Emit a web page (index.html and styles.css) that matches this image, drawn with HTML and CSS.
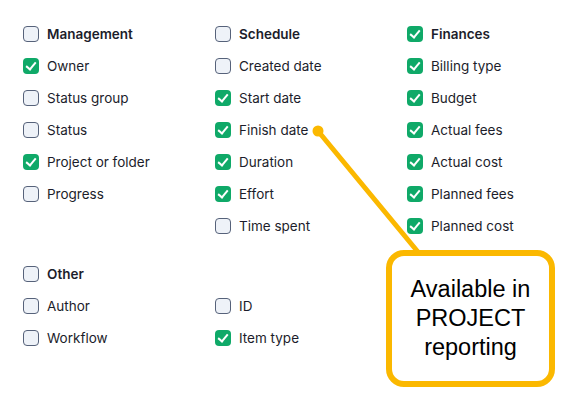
FILE: index.html
```html
<!DOCTYPE html>
<html lang="en">
<head>
    <meta charset="UTF-8">
    <title>Report fields</title>
    <link rel="stylesheet" href="styles.css">
</head>
<body>
    <div class="fields">
        <div class="group">
            <div class="column">
                <label class="field title"><span class="box"></span>Management</label>
                <label class="field"><span class="box checked"></span>Owner</label>
                <label class="field"><span class="box"></span>Status group</label>
                <label class="field"><span class="box"></span>Status</label>
                <label class="field"><span class="box checked"></span>Project or folder</label>
                <label class="field"><span class="box"></span>Progress</label>
            </div>
            <div class="column">
                <label class="field title"><span class="box"></span>Schedule</label>
                <label class="field"><span class="box"></span>Created date</label>
                <label class="field"><span class="box checked"></span>Start date</label>
                <label class="field"><span class="box checked"></span>Finish date</label>
                <label class="field"><span class="box checked"></span>Duration</label>
                <label class="field"><span class="box checked"></span>Effort</label>
                <label class="field"><span class="box"></span>Time spent</label>
            </div>
            <div class="column">
                <label class="field title"><span class="box checked"></span>Finances</label>
                <label class="field"><span class="box checked"></span>Billing type</label>
                <label class="field"><span class="box checked"></span>Budget</label>
                <label class="field"><span class="box checked"></span>Actual fees</label>
                <label class="field"><span class="box checked"></span>Actual cost</label>
                <label class="field"><span class="box checked"></span>Planned fees</label>
                <label class="field"><span class="box checked"></span>Planned cost</label>
            </div>
        </div>

        <div class="group other">
            <div class="column">
                <label class="field title"><span class="box"></span>Other</label>
                <label class="field"><span class="box"></span>Author</label>
                <label class="field"><span class="box"></span>Workflow</label>
            </div>
            <div class="column">
                <div class="field"></div>
                <label class="field"><span class="box"></span>ID</label>
                <label class="field"><span class="box checked"></span>Item type</label>
            </div>
        </div>
    </div>

    <!-- callout over the list -->
    <svg class="pointer" width="568" height="407" viewBox="0 0 568 407">
        <line x1="318" y1="131" x2="418" y2="252" stroke="#fbb800" stroke-width="5" stroke-linecap="round"/>
        <circle cx="318" cy="131" r="5.5" fill="#fbb800"/>
    </svg>
    <div class="callout">Available in PROJECT reporting</div>
</body>
</html>
```

FILE: styles.css
```css
body {
    margin: 0;
    padding: 18px 0 0 23px;
    background-color: #fff;
    font-family: Inter, "Noto Sans", sans-serif;
    font-size: 13.5px;
    color: #1c1d2b;
}
.group {
    display: grid;
    grid-template-columns: 192px 192px 1fr;
}
.other {
    margin-top: 16px;
}
.field {
    display: flex;
    align-items: center;
    gap: 8px;
    height: 32px;
}
.title {
    font-weight: 600;
}
.box {
    box-sizing: border-box;
    width: 16px;
    height: 16px;
    border: 1.5px solid #56627a;
    border-radius: 4px;
    background-color: #eef2f8;
    flex-shrink: 0;
}
.box.checked {
    border: none;
    background-color: #0fa968;
    position: relative;
}
.box.checked::after {
    content: "";
    position: absolute;
    left: 5px;
    top: 2px;
    width: 4px;
    height: 8px;
    border: solid #fff;
    border-width: 0 2.5px 2.5px 0;
    transform: rotate(40deg);
}
.pointer {
    position: absolute;
    left: 0;
    top: 0;
}
.callout {
    position: absolute;
    left: 386px;
    top: 250px;
    box-sizing: border-box;
    width: 169px;
    height: 137px;
    padding: 0 10px;
    border: 6px solid #fbb800;
    border-radius: 18px;
    background-color: #fff;
    display: flex;
    align-items: center;
    justify-content: center;
    text-align: center;
    font-family: "Liberation Sans", Arial, sans-serif;
    font-size: 23.5px;
    line-height: 29px;
    color: #000;
}
```
